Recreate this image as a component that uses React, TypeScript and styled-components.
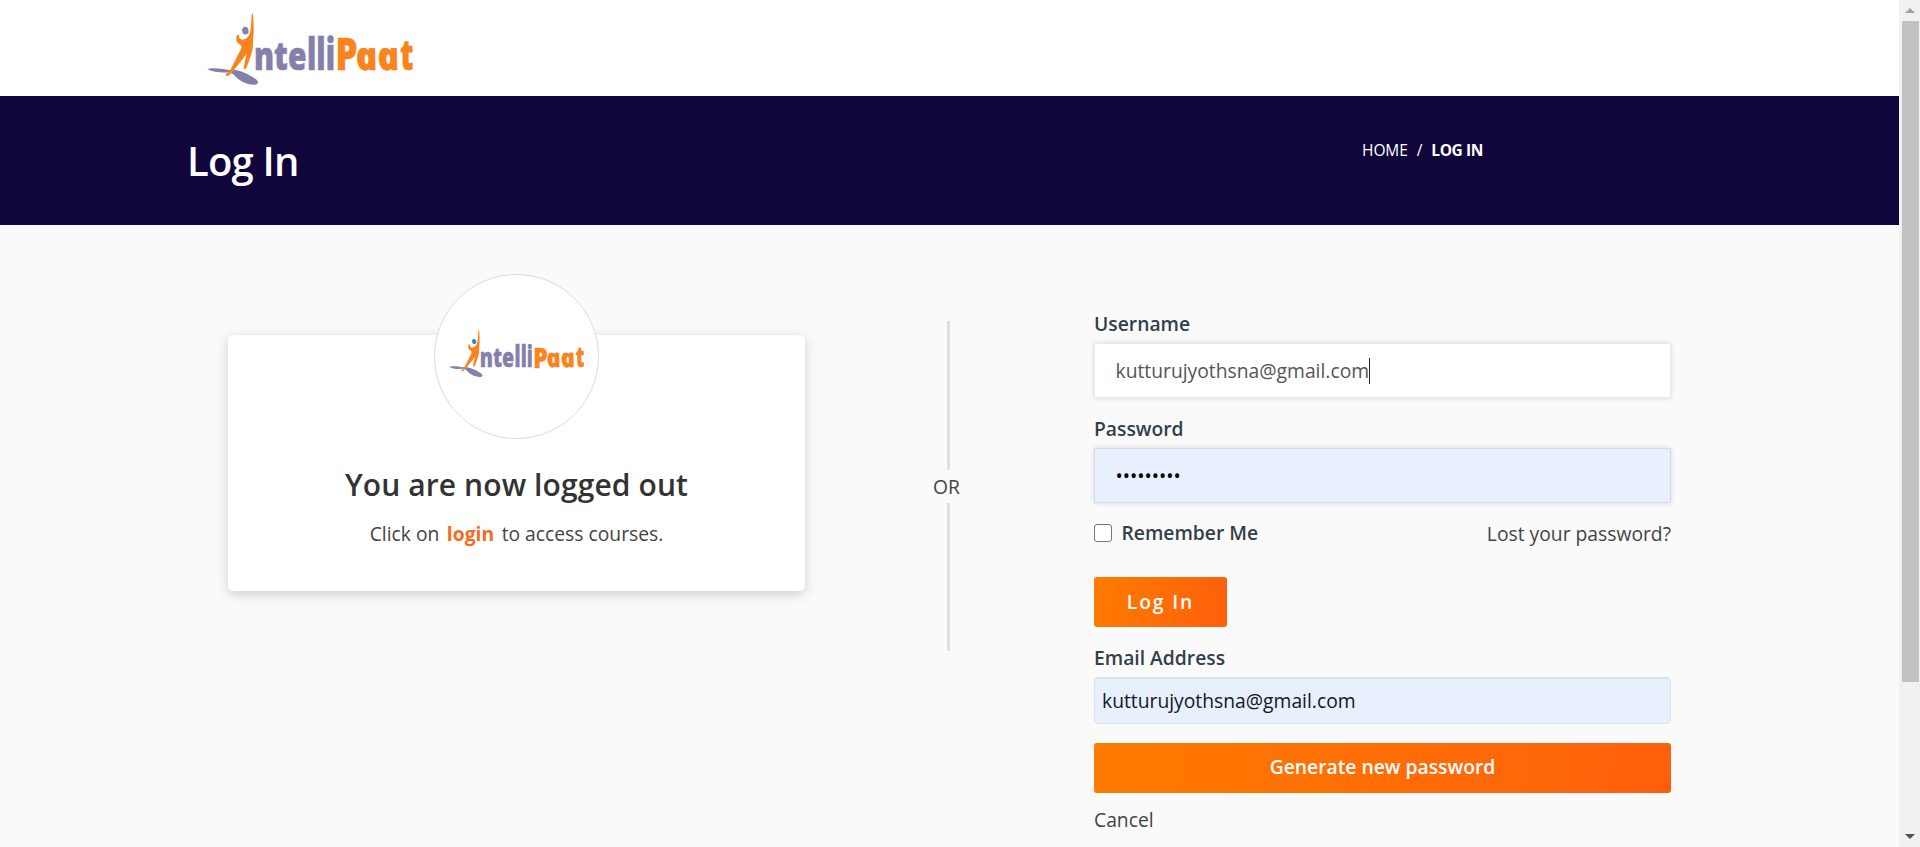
import React from "react";
import styled, { createGlobalStyle } from "styled-components";

const GlobalStyle = createGlobalStyle`
  *, *::before, *::after { box-sizing: border-box; }
  html, body { margin: 0; padding: 0; overflow: hidden; }
  body {
    font-family: "Open Sans", "Noto Sans", sans-serif;
    font-size: 19.3px;
    line-height: 26px;
    color: #444;
    background: #fafafa;
  }
`;

const Window = styled.div`
  display: flex;
  width: 1920px;
  height: 847px;
  overflow: hidden;
`;

const Page = styled.div`
  flex: 1;
  min-width: 0;
  background: #fafafa;
`;

const Header = styled.header`
  height: 96px;
  padding: 13px 0 0 207px;
  background: #fff;
`;

const LogoSvg = styled.svg<{ $width: number }>`
  display: block;
  width: ${(p) => p.$width}px;
  height: auto;
  overflow: visible;
`;

const Banner = styled.div`
  display: flex;
  align-items: flex-start;
  justify-content: space-between;
  height: 129px;
  padding: 35px 416px 0 187px;
  background: #10063b;
  color: #fff;
`;

const PageTitle = styled.h1`
  margin: 0;
  font-size: 40px;
  line-height: 60px;
  font-weight: 600;
  letter-spacing: -0.8px;
`;

const Breadcrumb = styled.nav`
  display: flex;
  gap: 9px;
  margin-top: 7px;
  font-size: 15.5px;
  line-height: 24px;
`;

const Crumb = styled.span<{ $current?: boolean }>`
  font-weight: ${(p) => (p.$current ? 700 : 400)};
  letter-spacing: ${(p) => (p.$current ? "-0.4px" : "-0.1px")};
`;

const Content = styled.main`
  display: flex;
  align-items: flex-start;
  padding: 86px 0 0 228px;
`;

const Card = styled.section`
  display: flex;
  flex-direction: column;
  align-items: center;
  width: 577px;
  height: 256px;
  margin-top: 24px;
  border-radius: 5px;
  background: #fff;
  box-shadow: 0 3px 12px rgba(0, 0, 0, 0.18);
`;

const Avatar = styled.div`
  display: flex;
  align-items: center;
  justify-content: center;
  flex: none;
  width: 165px;
  height: 165px;
  margin-top: -61px;
  padding-bottom: 6px;
  border: 1px solid #dcdcdc;
  border-radius: 50%;
  background: #fff;
`;

const CardTitle = styled.h2`
  margin: 26px 0 15px;
  font-size: 30px;
  line-height: 40px;
  font-weight: 600;
  letter-spacing: 0.1px;
  color: #333;
`;

const CardText = styled.p`
  display: flex;
  gap: 7.5px;
  margin: 0;
  line-height: 28px;
`;

const LoginLink = styled.a`
  font-weight: 700;
  color: #f76b1c;
`;

const Divider = styled.div`
  display: flex;
  flex-direction: column;
  align-items: center;
  width: 33px;
  height: 330px;
  margin: 10px 0 0 127px;
`;

const DividerLine = styled.div`
  flex: 1;
  width: 3px;
  background: #e0e0e0;
`;

const DividerText = styled.span`
  height: 33px;
  padding-right: 4px;
  line-height: 33px;
`;

const Form = styled.form`
  display: flex;
  flex-direction: column;
  width: 577px;
  margin-left: 129px;
`;

const Label = styled.label`
  font-weight: 600;
  color: #32404b;
`;

const Field = styled.div<{ $filled?: boolean }>`
  display: flex;
  align-items: center;
  height: 55px;
  margin: 6px 0 18px;
  padding: 1px 0 0 20.5px;
  border: 1px solid ${(p) => (p.$filled ? "#d3daea" : "#ebebeb")};
  background: ${(p) => (p.$filled ? "#e8f0fe" : "#fff")};
  box-shadow: 0 0 5px rgba(0, 0, 0, 0.14);
  color: ${(p) => (p.$filled ? "#000" : "#555")};
`;

const Caret = styled.span`
  width: 1px;
  height: 26px;
  background: #222;
`;

const EmailField = styled.div`
  display: flex;
  align-items: center;
  height: 47px;
  margin: 6px 0 19px;
  padding-left: 7px;
  border: 1px solid #dbe2e8;
  border-radius: 4px;
  background: #e8f0fe;
  box-shadow: inset 0 1px 1px rgba(0, 0, 0, 0.07);
  color: #111827;
`;

const Options = styled.div`
  display: flex;
  align-items: flex-start;
  justify-content: space-between;
  height: 26px;
  margin: -1px 0 31px;
`;

const Remember = styled(Label)`
  display: flex;
  align-items: center;
  gap: 9.5px;
`;

const Checkbox = styled.span`
  width: 18px;
  height: 18px;
  border: 1px solid #767676;
  border-radius: 3px;
  background: #fff;
`;

const TextLink = styled.a`
  color: #444;
`;

const LostLink = styled(TextLink)`
  padding-top: 1px;
`;

const Button = styled.button<{ $wide?: boolean }>`
  width: ${(p) => (p.$wide ? "100%" : "133px")};
  height: 50px;
  margin: 0 0 ${(p) => (p.$wide ? "14px" : "18px")};
  padding: 0 0 ${(p) => (p.$wide ? "2px" : "0")};
  border: 0;
  border-radius: 3px;
  background: linear-gradient(100deg, #ff7c00, #ff5f0c);
  color: #fff;
  font: 600 19.3px / 26px "Open Sans", sans-serif;
  letter-spacing: ${(p) => (p.$wide ? "0" : "1.9px")};
`;

const Scrollbar = styled.div`
  display: flex;
  flex-direction: column;
  align-items: center;
  width: 21px;
  height: 847px;
  padding: 0 1px 0 2px;
  background: #f1f1f1;
`;

const ScrollButton = styled.div`
  display: flex;
  align-items: center;
  justify-content: center;
  height: 21px;
  padding: 0 1px 1px 0;
`;

const ScrollThumb = styled.div`
  width: 17px;
  height: 661px;
  margin-bottom: auto;
  background: #c1c1c1;
`;

const PURPLE = "#8580ab";
const ORANGE = "#fa841c";

function Logo({ width, head = PURPLE }: { width: number; head?: string }) {
  return (
    <LogoSvg $width={width} viewBox="207 13 206 72" aria-label="IntelliPaat">
      <g transform="scale(0.33333) translate(600 0)">
        <path
          fill={PURPLE}
          d="M22 208C32 202 62 205 86 210L104 209C128 214 151 224 168 238C176 245 177 252 166 254C146 256 125 246 112 235C104 228 99 221 90 217C70 219 38 217 22 208Z"
        />
        <path
          fill={ORANGE}
          d="M157 38C161 45 161 70 161 90C161 104 159 116 159 125C160 143 156 157 150 174C146 187 142 199 137 206L131 207C133 190 137 175 140 161C128 178 112 197 100 212L88 226L79 229L77 222L88 216C98 196 110 173 121 151C127 141 124 137 118 132C110 128 107 121 109 111C110 105 115 103 117 106C116 113 119 118 126 119C136 118 145 112 148 104C154 89 154 62 155 44Z"
        />
        <ellipse cx="136" cy="92" rx="9.5" ry="11.5" transform="rotate(-12 136 92)" fill={head} />
      </g>
      <g fontFamily="Open Sans, sans-serif" fontWeight="800" strokeWidth="0.6">
        <g fill={PURPLE} stroke={PURPLE}>
          <text x="254" y="69.5" fontSize="39" textLength="52.5" lengthAdjust="spacingAndGlyphs">nte</text>
          <text x="307" y="69.8" fontSize="45" textLength="28" lengthAdjust="spacingAndGlyphs">lli</text>
        </g>
        <g fill={ORANGE} stroke={ORANGE}>
          <text x="335.5" y="70.3" fontSize="44" textLength="22" lengthAdjust="spacingAndGlyphs">P</text>
          <text
            transform="translate(358 69.5) skewX(12)"
            fontSize="39"
            fontStyle="italic"
            textLength="43.5"
            lengthAdjust="spacingAndGlyphs"
          >
            aa
          </text>
          <text x="400.3" y="69.5" fontSize="43" textLength="13.2" lengthAdjust="spacingAndGlyphs">t</text>
        </g>
      </g>
    </LogoSvg>
  );
}

export default function App() {
  return (
    <Window>
      <GlobalStyle />
      <Page>
        <Header>
          <Logo width={206} />
        </Header>
        <Banner>
          <PageTitle>Log In</PageTitle>
          <Breadcrumb>
            <Crumb>HOME</Crumb>
            <Crumb>/</Crumb>
            <Crumb $current>LOG IN</Crumb>
          </Breadcrumb>
        </Banner>
        <Content>
          <Card>
            <Avatar>
              <Logo width={135} head="#4775c4" />
            </Avatar>
            <CardTitle>You are now logged out</CardTitle>
            <CardText>
              <span>Click on</span>
              <LoginLink>login</LoginLink>
              <span>to access courses.</span>
            </CardText>
          </Card>
          <Divider>
            <DividerLine />
            <DividerText>OR</DividerText>
            <DividerLine />
          </Divider>
          <Form>
            <Label>Username</Label>
            <Field>
              <span>kutturujyothsna@gmail.com</span>
              <Caret />
            </Field>
            <Label>Password</Label>
            <Field $filled>•••••••••</Field>
            <Options>
              <Remember>
                <Checkbox />
                Remember Me
              </Remember>
              <LostLink>Lost your password?</LostLink>
            </Options>
            <Button type="button">Log In</Button>
            <Label>Email Address</Label>
            <EmailField>kutturujyothsna@gmail.com</EmailField>
            <Button type="button" $wide>
              Generate new password
            </Button>
            <TextLink>Cancel</TextLink>
          </Form>
        </Content>
      </Page>
      <Scrollbar>
        <ScrollButton>
          <svg width="10" height="5" viewBox="0 0 10 5">
            <path d="M0 5L5 0L10 5Z" fill="#a3a3a3" />
          </svg>
        </ScrollButton>
        <ScrollThumb />
        <ScrollButton>
          <svg width="10" height="5" viewBox="0 0 10 5">
            <path d="M0 0L5 5L10 0Z" fill="#505050" />
          </svg>
        </ScrollButton>
      </Scrollbar>
    </Window>
  );
}
